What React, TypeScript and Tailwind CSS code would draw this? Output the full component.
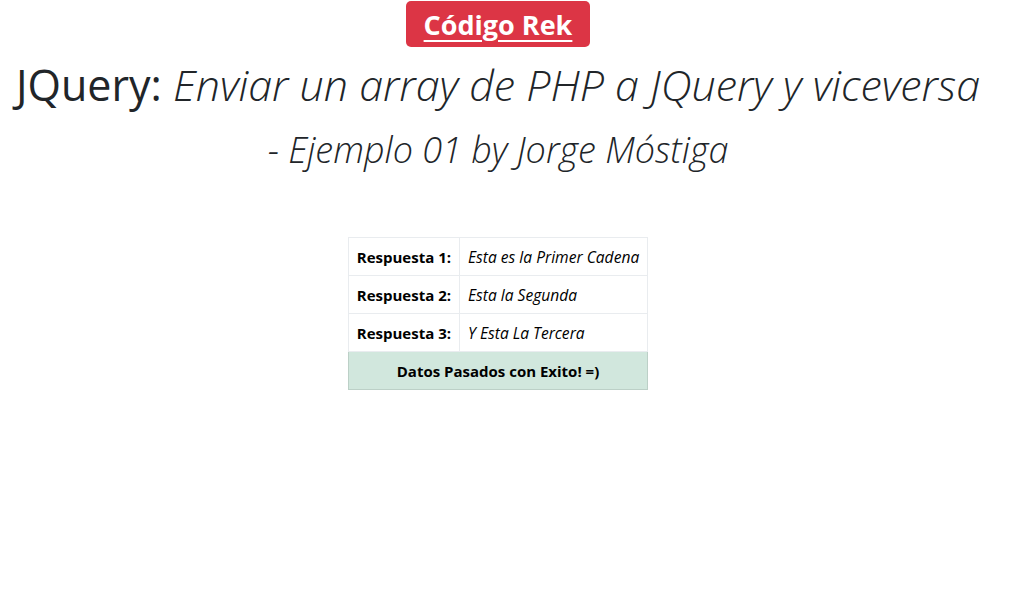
export default function App() {
  const rows = [
    { label: "Respuesta 1:", value: "Esta es la Primer Cadena" },
    { label: "Respuesta 2:", value: "Esta la Segunda" },
    { label: "Respuesta 3:", value: "Y Esta La Tercera" },
  ];

  return (
    <div className="min-h-screen bg-white text-[#212529] font-['Open_Sans',sans-serif]">
      <div className="flex flex-col items-center pr-[15px]">
        {/* Badge */}
        <a
          href="#"
          className="mt-px rounded-[5px] bg-[#dc3545] px-[18px] h-[46px] flex items-center text-[27px] font-bold leading-none text-white underline decoration-2 underline-offset-[5px]"
        >
          Código Rek
        </a>

        {/* Title */}
        <h1 className="mt-[8px] text-center text-[43px] font-light leading-[60px] whitespace-nowrap">
          <span className="font-normal">JQuery: </span>
          <i>Enviar un array de PHP a JQuery y viceversa</i>
        </h1>
        <h2 className="mt-[10px] text-center text-[36px] font-light italic leading-[50px]">
          - Ejemplo 01 by Jorge Móstiga
        </h2>

        {/* Table */}
        <table className="mt-[62px] border-collapse text-[15px] leading-[20px] text-black">
          <tbody>
            {rows.map((r) => (
              <tr key={r.label} className="h-[38px]">
                <td className="border border-[#e9ecef] px-[8px] font-bold whitespace-nowrap">{r.label}</td>
                <td className="border border-[#e9ecef] px-[8px] text-[15.6px] italic whitespace-nowrap">{r.value}</td>
              </tr>
            ))}
            <tr className="h-[38px]">
              <td colSpan={2} className="border border-[#bcd0c7] bg-[#d1e7dd] text-center font-bold">
                Datos Pasados con Exito! =)
              </td>
            </tr>
          </tbody>
        </table>
      </div>
    </div>
  );
}
